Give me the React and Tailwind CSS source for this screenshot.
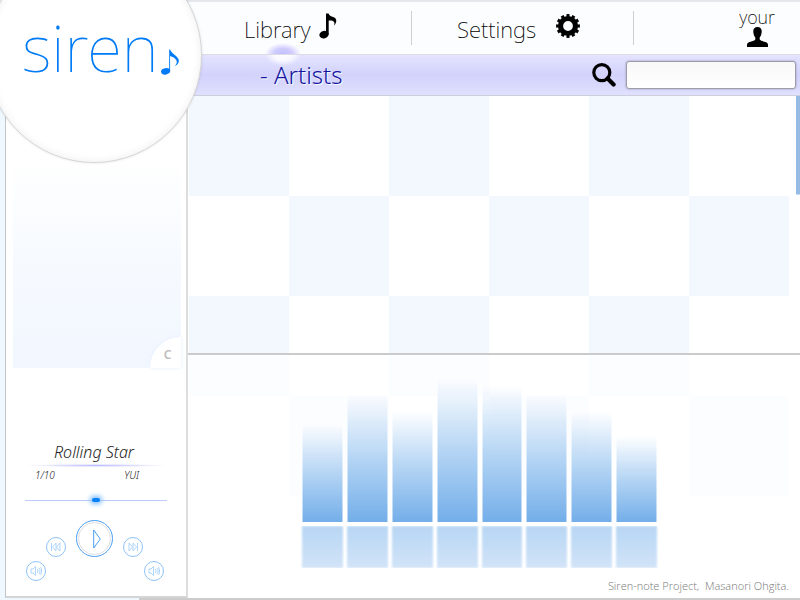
import React from "react";

const bars = [
  { id: "b1", height: 98 },
  { id: "b2", height: 128 },
  { id: "b3", height: 111 },
  { id: "b4", height: 144 },
  { id: "b5", height: 137 },
  { id: "b6", height: 128 },
  { id: "b7", height: 111 },
  { id: "b8", height: 86 },
];

function Note({ className }) {
  return (
    <svg className={className} viewBox="0 0 18 26" fill="currentColor" aria-hidden="true">
      <ellipse cx="5" cy="21.6" rx="4.7" ry="3.7" transform="rotate(-15 5 21.6)" />
      <path d="M7 0.5h2.6c0.4 2 2.4 2.8 4.6 3.6 2.4 0.9 3.4 2.3 3 4.4-0.2 1.4-0.9 2.9-2.1 4.1 0.8-2.4 0.3-4-1.7-4.8-1.1-0.4-2.5-0.5-3.7-0.2V21.5H7z" />
    </svg>
  );
}

function ThinNote({ className }) {
  return (
    <svg className={className} viewBox="0 0 18 26" fill="currentColor" aria-hidden="true">
      <ellipse cx="4.6" cy="22.3" rx="4.6" ry="3.2" transform="rotate(-12 4.6 22.3)" />
      <path d="M8.2 0.6h0.8c1 2.6 3.6 4.4 6 6.4 2.6 2.2 3.4 4.4 2.4 6.8-0.8 1.8-2.3 3-4.6 3.8 1.8-1.3 3-2.9 3-4.7 0-2.6-3.4-4.9-6.7-5.9V22.5H8.2z" />
    </svg>
  );
}

function Gear({ className }) {
  return (
    <svg className={className} viewBox="0 0 24 24" fill="none" stroke="currentColor" aria-hidden="true">
      <circle cx="12" cy="12" r="7.5" strokeWidth="5.2" />
      <circle cx="12" cy="12" r="10.4" strokeWidth="3" pathLength="120" strokeDasharray="5.6 4.4" strokeDashoffset="2.8" />
    </svg>
  );
}

function Search({ className }) {
  return (
    <svg className={className} viewBox="0 0 24 24" fill="none" stroke="currentColor" aria-hidden="true">
      <circle cx="9.8" cy="9.6" r="8" strokeWidth="3.2" />
      <path d="M15.6 15.6l6 6" strokeWidth="4.2" strokeLinecap="round" />
    </svg>
  );
}

function Person({ className }) {
  return (
    <svg className={className} viewBox="0 0 21 20" fill="currentColor" aria-hidden="true">
      <path d="M10.5 0c2.9 0 4.3 1.8 4.2 4.6-0.1 2.6-0.7 4.6-2 5.8v2.2c0.6 1 2.4 1.5 4.8 2.2 2.5 0.8 3.5 1.6 3.5 3V20H0v-2.2c0-1.4 1-2.2 3.5-3 2.4-0.7 4.2-1.2 4.8-2.2v-2.2c-1.3-1.2-1.9-3.2-2-5.8C6.2 1.8 7.6 0 10.5 0z" />
    </svg>
  );
}

function SmallButton({ label, children }) {
  return (
    <button type="button" aria-label={label} className="size-5 shrink-0 rounded-full border border-[#8fc3f8] bg-white flex items-center justify-center text-[#9dccfa]">
      <svg className="size-3" viewBox="0 0 12 12" fill="none" stroke="currentColor" strokeWidth="0.8" aria-hidden="true">
        {children}
      </svg>
    </button>
  );
}

const speaker = (
  <>
    <path d="M1 4h2l2.5-2.5v9L3 8H1z" />
    <path d="M7.3 4c0.8 1.2 0.8 2.8 0 4M9 2.8c1.4 2 1.4 4.4 0 6.4M10.6 2c1.3 2.4 1.3 5.6 0 8" />
  </>
);

function Logo() {
  return (
    <a
      href="#home"
      className="absolute -left-[14px] -top-[53px] z-20 flex size-[216px] items-end rounded-full border border-[#d6d6d6] bg-white pb-20 pl-[35px] text-[#007bf5] shadow-[inset_0_0_10px_#00000012,0_0_3px_#0000001c]"
    >
      <span className="text-[64px] leading-[68px] font-thin">siren</span>
      <ThinNote className="mb-[7px] ml-[2px] h-[26px] w-[18px]" />
    </a>
  );
}

function Sidebar() {
  return (
    <div className="flex w-[188px] shrink-0 flex-col">
      <aside className="ml-[5px] flex flex-1 flex-col border-b-2 border-l border-r-2 border-b-[#d5d5d5] border-l-[#c4c4c4] border-r-[#dddddd] bg-white px-[7px]">
        <div className="mr-[-2px] mt-[158px] flex h-[210px] items-end justify-end bg-linear-to-b from-white via-[#f6faff] to-[#f2f7ff]">
          <button type="button" className="size-[31px] rounded-tl-full bg-white pl-1 pt-1 text-[12px] leading-4 font-semibold text-[#bdbdbd] shadow-[0_0_4px_#e6eeff]">
            C
          </button>
        </div>
        <div className="mt-[72px] pr-1 text-center text-[16px] leading-6 font-light italic text-[#222]">Rolling Star</div>
        <div className="mx-3 h-[3px] bg-[radial-gradient(closest-side,#bcbcff,#dcdcff_50%,transparent)]" />
        <div className="flex justify-between pl-[22px] pr-[40px] text-[10px] leading-4 font-light italic text-[#222]">
          <span>1/10</span>
          <span>YUI</span>
        </div>
        <input
          type="range"
          aria-label="Position"
          defaultValue="50"
          className="mx-3 mt-[13px] h-2 appearance-none bg-[linear-gradient(#bccbf8,#bccbf8)] bg-[length:100%_1px] bg-center bg-no-repeat [&::-webkit-slider-thumb]:h-[4px] [&::-webkit-slider-thumb]:w-[8px] [&::-webkit-slider-thumb]:appearance-none [&::-webkit-slider-thumb]:rounded-full [&::-webkit-slider-thumb]:bg-[#0a80f5] [&::-webkit-slider-thumb]:shadow-[0_0_5px_2px_#7dbcff]"
        />
        <div className="mt-4 flex justify-center gap-[10px] pr-[3px]">
          <div className="pt-[17px]">
            <SmallButton label="Previous">
              <path d="M1.5 2v8M6 2v8L2.5 6zM10 2v8L6.5 6z" />
            </SmallButton>
          </div>
          <button type="button" aria-label="Play" className="flex size-[37px] items-center justify-center rounded-full border border-[#4a9ff5] bg-white p-px text-[#4a9ff5]">
            <span className="flex size-full items-center justify-center rounded-full border border-[#dedede]">
              <svg className="ml-1 h-5 w-2" viewBox="0 0 8 20" fill="none" stroke="currentColor" aria-hidden="true">
                <path d="M0.7 1v18L7.3 10z" />
              </svg>
            </span>
          </button>
          <div className="pt-[17px]">
            <SmallButton label="Next">
              <path d="M2 2v8l3.5-4zM6 2v8l3.5-4zM10.5 2v8" />
            </SmallButton>
          </div>
        </div>
        <div className="mt-1 flex justify-between pl-[13px] pr-[15px]">
          <SmallButton label="Volume down">{speaker}</SmallButton>
          <SmallButton label="Volume up">{speaker}</SmallButton>
        </div>
      </aside>
      <div className="ml-[139px] h-[2px] bg-[#cccccc]" />
    </div>
  );
}

function Header() {
  return (
    <header>
      <nav className="flex h-[55px] items-center border-b border-t-2 border-b-[#dcdde2] border-t-[#e4e8ed] bg-[#fcfdff] text-[22px] font-extralight text-black">
        <a href="#library" className="relative flex h-full w-[223px] items-center gap-2 pl-14">
          <span className="pt-[2px]">Library</span>
          <Note className="mb-1 h-[26px] w-[18px] text-black" />
          <span className="absolute bottom-0 left-[77px] h-[11px] w-9 bg-[radial-gradient(18px_11px_at_50%_100%,#c2beff,#cfccff_50%,transparent)]" />
        </a>
        <a href="#settings" className="flex h-[34px] w-[223px] items-center gap-5 border-x border-[#cfcfd2] pl-[45px]">
          <span className="pt-[2px]">Settings</span>
          <Gear className="mb-1 size-6 text-black" />
        </a>
        <a href="#you" className="mb-[2px] ml-auto mr-[25px] flex flex-col items-center text-[18px] leading-[20px]">
          <span>your</span>
          <Person className="h-5 w-[21px] text-black" />
        </a>
      </nav>
      <div className="relative flex h-[41px] items-center border-b border-[#cfcfdc] bg-linear-to-b from-[#e4e4ff] via-[#d2d2fc] to-[#e0e0ff] pl-[72px] pr-1">
        <span className="absolute left-[77px] top-0 h-[11px] w-9 bg-[radial-gradient(18px_11px_at_50%_0%,#ffffff,#ffffffcc_50%,transparent)]" />
        <h1 className="relative text-[24px] leading-6 font-light text-[#1414a0] [text-shadow:1px_1px_1px_white]">- Artists</h1>
        <label htmlFor="search" aria-label="Search" className="ml-auto mr-[10px]">
          <Search className="size-6 text-black" />
        </label>
        <input
          id="search"
          type="search"
          className="h-7 w-[170px] rounded-[3px] border border-[#9c9cab] bg-linear-to-b from-[#f8f8f8] to-white px-2 text-[14px] shadow-[0_0_2px_#8888a0] outline-none"
        />
      </div>
    </header>
  );
}

function Visualizer() {
  return (
    <div className="flex flex-col items-center pr-[29px] pt-[21px]">
      <div className="flex h-[146px] w-[355px] items-end gap-1">
        {bars.map((bar) => (
          <div
            key={bar.id}
            className="flex-1 border-x border-white/50 bg-linear-to-t from-[#73aee9] via-[#b5d5f4] to-transparent"
            style={{ height: bar.height }}
          />
        ))}
      </div>
      <div className="mt-1 flex h-[42px] w-[355px] gap-1 overflow-x-visible overflow-y-clip">
        {bars.map((bar) => (
          <div key={bar.id} className="flex-1 bg-linear-to-b from-[#b7d6f4] to-[#d2e4f8] blur-[1px]" />
        ))}
      </div>
    </div>
  );
}

export default function App() {
  return (
    <div className="relative flex min-h-screen overflow-hidden bg-[#eff7ff] font-['Noto_Sans','Open_Sans',sans-serif]">
      <Logo />
      <Sidebar />
      <div className="flex min-w-0 flex-1 flex-col border-b-2 border-[#cccccc] bg-white">
        <Header />
        <main className="grid flex-1">
          <div className="col-start-1 row-start-1 ml-px h-[400px] w-[600px] bg-[conic-gradient(#fff_25%,#f3f8ff_0_50%,#fff_0_75%,#f3f8ff_0)] bg-[length:200px_200px]" />
          <div className="z-10 col-start-1 row-start-1 flex flex-col">
            <div className="flex flex-1 justify-end">
              <div className="h-[99px] w-1 border-b border-[#c5dbf3] bg-[#96bce6]" />
            </div>
            <footer className="flex h-[245px] flex-col border-t-2 border-[#cbcbcb] bg-white/75">
              <Visualizer />
              <p className="ml-auto mr-[11px] mt-[10px] font-['Open_Sans','Noto_Sans',sans-serif] text-[11px] leading-4 font-light text-[#777]">
                Siren-note Project,&nbsp; Masanori Ohgita.
              </p>
            </footer>
          </div>
        </main>
      </div>
    </div>
  );
}
